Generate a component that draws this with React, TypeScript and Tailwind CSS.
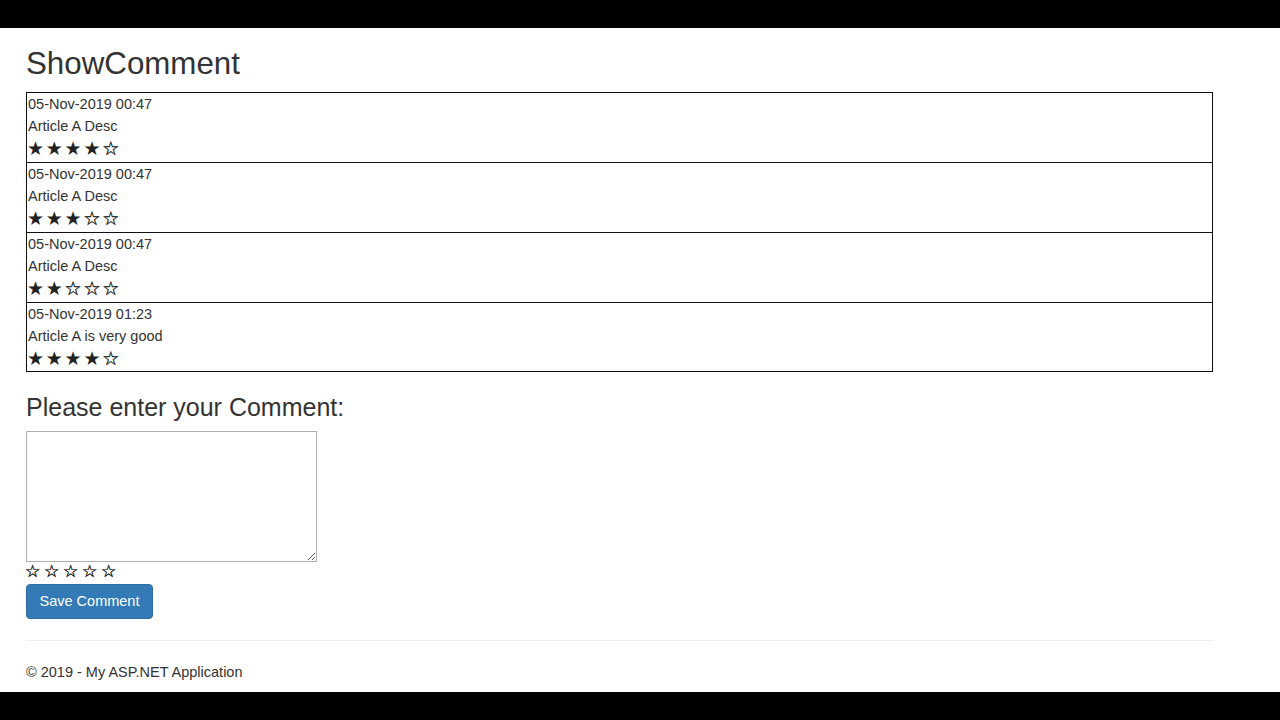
import React from "react";

type Comment = {
  date: string;
  text: string;
  rating: number;
};

const comments: Comment[] = [
  { date: "05-Nov-2019 00:47", text: "Article A Desc", rating: 4 },
  { date: "05-Nov-2019 00:47", text: "Article A Desc", rating: 3 },
  { date: "05-Nov-2019 00:47", text: "Article A Desc", rating: 2 },
  { date: "05-Nov-2019 01:23", text: "Article A is very good", rating: 4 },
];

function Stars({ rating, last }: { rating: number; last: boolean }) {
  return (
    <div
      className={`-ml-px flex items-center pb-[2px] font-['DejaVu_Sans',sans-serif] text-[19px] leading-none text-[#222] ${
        last ? "h-[24px]" : "h-[25px]"
      }`}
    >
      {[1, 2, 3, 4, 5].map((i) =>
        i <= rating ? (
          <span key={i} className="inline-block w-[18.8px]">
            ★
          </span>
        ) : (
          <span key={i} className="inline-block w-[18.8px] [-webkit-text-stroke:0.35px_#222]">
            ☆
          </span>
        )
      )}
    </div>
  );
}

function CommentRow({ comment, first, last }: { comment: Comment; first: boolean; last: boolean }) {
  return (
    <div className={`px-px ${first ? "" : "border-t border-[#111]"}`}>
      <div className="h-[22px] leading-[22px]">{comment.date}</div>
      <div className="h-[22px] leading-[22px]">{comment.text}</div>
      <Stars rating={comment.rating} last={last} />
    </div>
  );
}

export default function App() {
  return (
    <div className="flex h-[720px] flex-col bg-black font-['Liberation_Sans',Arial,sans-serif] text-[14.5px] text-[#333]">
      <div className="h-[28px] shrink-0" />
      <main className="h-[664px] shrink-0 bg-white px-[26px] pt-[19px]">
        <h2 className="mb-[11px] h-[34px] text-[31.3px] leading-[34px]">ShowComment</h2>

        <div className="w-[1187px] border border-[#111]">
          {comments.map((c, i) => (
            <CommentRow key={i} comment={c} first={i === 0} last={i === comments.length - 1} />
          ))}
        </div>

        <h3 className="mt-[20px] h-[30px] text-[25px] leading-[30px]">Please enter your Comment:</h3>

        <textarea className="mt-[9px] block h-[131px] w-[291px] border border-[#b0b0b0] bg-white" />

        <div className="-ml-px flex h-[19px] items-center pb-[1px] font-['DejaVu_Sans',sans-serif] text-[17px] leading-none text-[#111] [-webkit-text-stroke:0.35px_#111]">
          {[1, 2, 3, 4, 5].map((i) => (
            <span key={i} className="inline-block w-[19px]">
              ☆
            </span>
          ))}
        </div>

        <button className="mt-[3px] h-[35px] w-[127px] rounded-[4px] border border-[#2e6da4] bg-[#337ab7] text-[14.5px] text-white">
          Save Comment
        </button>

        <hr className="mt-[21px] w-[1187px] border-t border-[#eee]" />

        <footer className="mt-[20px] h-[22px] leading-[22px]">© 2019 - My ASP.NET Application</footer>
      </main>
      <div className="h-[28px] shrink-0" />
    </div>
  );
}
